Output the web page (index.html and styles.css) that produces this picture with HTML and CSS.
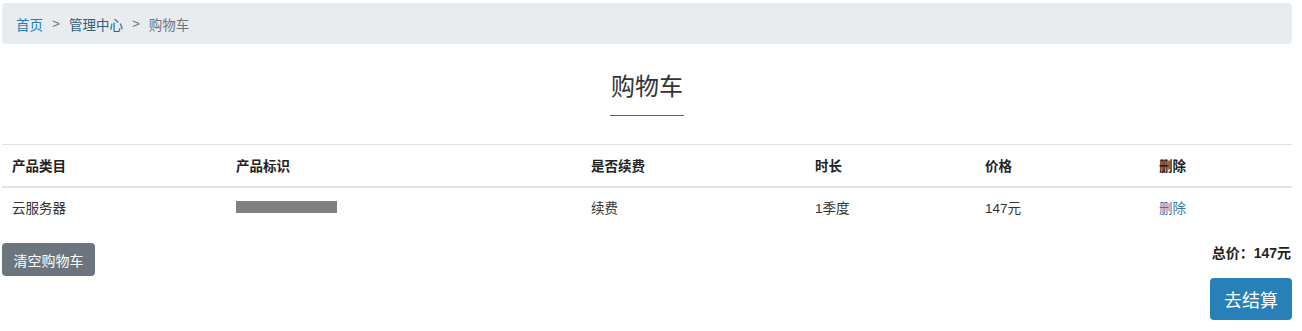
FILE: index.html
```html
<!DOCTYPE html>
<html lang="zh-CN">
<head>
    <meta charset="UTF-8">
    <title>购物车</title>
    <link rel="stylesheet" href="styles.css">
</head>
<body>
    <div class="page">
        <nav class="breadcrumb">
            <a href="#" class="crumb-home">首页</a>
            <span class="sep">&gt;</span>
            <a href="#" class="crumb-admin">管理中心</a>
            <span class="sep">&gt;</span>
            <span class="crumb-active">购物车</span>
        </nav>

        <div class="title-wrap">
            <h2 class="title">购物车</h2>
        </div>

        <table class="cart">
            <thead>
                <tr>
                    <th class="c1">产品类目</th>
                    <th class="c2">产品标识</th>
                    <th class="c3">是否续费</th>
                    <th class="c4">时长</th>
                    <th class="c5">价格</th>
                    <th class="c6">删除</th>
                </tr>
            </thead>
            <tbody>
                <tr>
                    <td>云服务器</td>
                    <td><span class="masked"></span></td>
                    <td>续费</td>
                    <td>1季度</td>
                    <td>147元</td>
                    <td><a href="#" class="del">删除</a></td>
                </tr>
            </tbody>
        </table>

        <div class="footer-row">
            <button class="btn btn-gray">清空购物车</button>
            <div class="checkout">
                <div class="total">总价：147元</div>
                <button class="btn btn-blue">去结算</button>
            </div>
        </div>
    </div>
</body>
</html>
```

FILE: styles.css
```css
body {
    margin: 0;
    background-color: #fff;
    font-family: "Liberation Sans", "Noto Sans CJK SC", sans-serif;
    font-size: 14px;
    color: #333;
}
.page {
    width: 1290px;
    margin-left: 2px;
    padding-top: 3px;
}
.breadcrumb {
    display: flex;
    align-items: center;
    height: 41px;
    padding: 0 14px;
    background-color: #e9ecef;
    border-radius: 4px;
    font-size: 13.5px;
}
.breadcrumb a {
    text-decoration: none;
}
.crumb-home {
    color: #2480c0;
}
.crumb-admin {
    color: #30607f;
}
.sep {
    color: #6c757d;
    margin: 0 9px;
}
.crumb-active {
    color: #6c757d;
}
.title-wrap {
    display: flex;
    justify-content: center;
    padding-top: 25px;
}
.title {
    margin: 0;
    padding: 0 1px 10px;
    font-size: 24px;
    font-weight: normal;
    line-height: 36px;
    color: #333;
    border-bottom: 1px solid #2f6f9f;
}
.cart {
    width: 100%;
    margin-top: 28px;
    border-collapse: collapse;
}
.cart th,
.cart td {
    padding: 0 10px;
    text-align: left;
    font-size: 13.5px;
}
.cart th {
    height: 39px;
    padding-bottom: 2px;
    font-weight: bold;
    color: #222;
    border-top: 1px solid #dee2e6;
    border-bottom: 2px solid #dee2e6;
}
.cart td {
    height: 38px;
    padding-bottom: 4px;
    color: #333;
}
.c1 { width: 204px; }
.c2 { width: 335px; }
.c3 { width: 204px; }
.c4 { width: 150px; }
.c5 { width: 154px; }
.masked {
    display: inline-block;
    width: 101px;
    height: 12px;
    background-color: #808080;
    vertical-align: -1px;
}
.del {
    color: #3a78a8;
    text-decoration: none;
}
.footer-row {
    display: flex;
    justify-content: space-between;
    align-items: flex-start;
    padding-top: 13px;
}
.btn {
    border: none;
    color: #fff;
    font-family: "Liberation Sans", "Noto Sans CJK SC", sans-serif;
    border-radius: 4px;
    cursor: pointer;
}
.btn-gray {
    width: 93px;
    height: 33px;
    background-color: #6c757d;
    font-size: 14px;
    padding: 0;
}
.checkout {
    display: flex;
    flex-direction: column;
    align-items: flex-end;
}
.total {
    font-weight: bold;
    font-size: 14px;
    color: #222;
    line-height: 20px;
    padding-top: 0;
    margin-right: 1px;
}
.btn-blue {
    margin-top: 15px;
    width: 82px;
    height: 42px;
    background-color: #2880b8;
    font-size: 18px;
    padding: 0;
}
```
